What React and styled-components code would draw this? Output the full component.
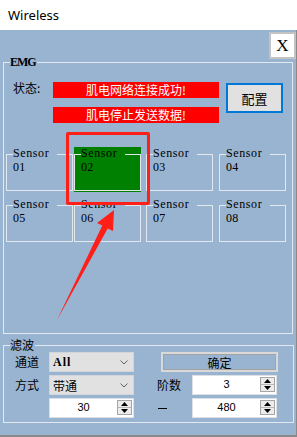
import React from 'react';
import styled, { createGlobalStyle } from 'styled-components';

const Global = createGlobalStyle`
  html, body { margin: 0; padding: 0; background: #fff; }
  body { width: 297px; height: 437px; overflow: hidden; font-family: "Noto Sans CJK SC", sans-serif; }
  * { box-sizing: border-box; }
`;

const Window = styled.div`
  position: relative;
  width: 297px;
  height: 437px;
  display: flex;
  flex-direction: column;
`;

const TitleBar = styled.div`
  height: 30px;
  flex: none;
  background: #fff;
  display: flex;
  align-items: center;
  padding-left: 8px;
  font-family: "Noto Sans", sans-serif;
  font-size: 13px;
  color: #000;
`;

const Body = styled.div`
  flex: 1;
  background: #99b4d1;
  border-right: 1px solid #8a8a8a;
  border-bottom: 2px solid #8a8a8a;
  padding-top: 2px;
  display: flex;
  flex-direction: column;
`;

const HeaderRow = styled.div`
  display: flex;
  justify-content: flex-end;
  margin-bottom: -2px;
`;

const CloseButton = styled.div`
  width: 27px;
  height: 27px;
  border: 2px solid #c3c3c3;
  background: #fff;
  font-family: "Liberation Serif", serif;
  font-size: 17px;
  line-height: 1;
  color: #000;
  display: flex;
  align-items: center;
  justify-content: center;
`;

const Group = styled.fieldset`
  margin: ${p => p.$mt}px 0 0 3px;
  width: ${p => p.$w}px;
  height: ${p => p.$h}px;
  padding: 0;
  border: 1px solid #e4e9ef;
  min-width: 0;
`;

const GroupLegend = styled.legend`
  margin-left: 6px;
  padding: 0 1px 0 0;
  font-family: ${p => p.$serif ? '"Liberation Serif", serif' : '"Noto Sans CJK SC", sans-serif'};
  font-size: 12px;
  font-weight: ${p => p.$serif ? 'bold' : 'normal'};
  letter-spacing: ${p => p.$serif ? '-1px' : '0'};
  line-height: ${p => p.$lh}px;
  color: #000;
`;

const StatusGrid = styled.div`
  display: grid;
  grid-template-columns: 33px 166px 57px;
  grid-template-rows: 16px 16px;
  column-gap: 7px;
  row-gap: 9px;
  margin-top: 14px;
  padding-left: 9px;
`;

const StatusLabel = styled.div`
  font-size: 12px;
  line-height: 12px;
  color: #000;
  white-space: nowrap;
`;

const StatusBar = styled.div`
  background: #ff0000;
  color: #fff;
  font-size: 12px;
  line-height: 16px;
  text-align: center;
  grid-column: 2;
  grid-row: ${p => p.$row};
`;

const ConfigButton = styled.div`
  grid-column: 3;
  grid-row: 1 / span 2;
  margin-top: 1px;
  height: 30px;
  border: 2px solid #0078d7;
  background: #e1e1e1;
  display: flex;
  align-items: center;
  justify-content: center;
  font-size: 13px;
  color: #000;
`;

const SensorArea = styled.div`
  margin-top: 24px;
  padding-left: 2px;
  display: flex;
  flex-direction: column;
  gap: 6px;
`;

const SensorRow = styled.div`
  display: flex;
`;

const SensorCell = styled.div`
  padding: 1px 0;
  margin-left: ${p => p.$ml}px;
  background: ${p => (p.$active ? '#008000' : 'transparent')};
`;

const SensorBox = styled.fieldset`
  margin: 0;
  padding: 0 0 0 6px;
  border: 1px solid #e2e7ed;
  width: 67px;
  height: 43px;
  min-width: 0;
`;

const SensorLegend = styled.legend`
  padding: 0 8px 0 0;
  margin: 0;
  font-family: "Liberation Serif", serif;
  font-size: 12px;
  letter-spacing: 0.6px;
  line-height: 11px;
  height: 12px;
  color: #000;
`;

const SensorNum = styled.div`
  margin-top: 2px;
  font-family: "Liberation Serif", serif;
  font-size: 12px;
  letter-spacing: 0.3px;
  line-height: 11px;
  color: #000;
`;

const FilterGrid = styled.div`
  display: grid;
  grid-template-columns: 34px 85px 23px 35px 85px;
  grid-auto-rows: 20px;
  row-gap: 3px;
  padding: 1px 0 0 11px;
  align-items: center;
`;

const FieldLabel = styled.div`
  grid-column: ${p => p.$col};
  font-size: 12px;
  line-height: 20px;
  color: #000;
  white-space: nowrap;
`;

const Dash = styled.div`
  grid-column: 4;
  margin-left: 1px;
  margin-top: 1px;
  width: 9px;
  height: 1.5px;
  background: #000;
`;

const Select = styled.div`
  grid-column: 2;
  height: 20px;
  background: #e1e1e1;
  border: 1px solid #d2d6da;
  display: flex;
  align-items: center;
  justify-content: space-between;
  padding: 0 5px 0 3px;
`;

const SelectText = styled.span`
  font-family: ${p => p.$serif ? '"Liberation Serif", serif' : '"Noto Sans CJK SC", sans-serif'};
  font-size: 12px;
  font-weight: ${p => p.$serif ? 'bold' : 'normal'};
  letter-spacing: ${p => p.$serif ? '1px' : '0'};
  color: #000;
`;

const OkButton = styled.div`
  grid-column: 4 / span 2;
  margin-left: 4px;
  width: 117px;
  height: 20px;
  border: 2px solid #d9d9d9;
  box-shadow: inset 0 0 0 1px #a3a3a3;
  display: flex;
  align-items: center;
  justify-content: center;
  font-size: 12px;
  color: #000;
`;

const Spin = styled.div`
  grid-column: ${p => p.$col};
  height: 20px;
  background: #fff;
  border: 1px solid #dde1e5;
  display: flex;
  align-items: flex-start;
  padding: 1px 1px 0 0;
`;

const SpinValue = styled.span`
  flex: 1;
  text-align: center;
  font-family: "Liberation Sans", sans-serif;
  font-size: 11px;
  line-height: 14px;
  color: #000;
`;

const SpinButtons = styled.div`
  width: 15px;
  height: 15px;
  border: 1px solid #a5a5a5;
  background: #ececec;
  display: flex;
  flex-direction: column;
`;

const SpinHalf = styled.div`
  flex: 1;
  display: flex;
  align-items: center;
  justify-content: center;
  border-top: ${p => (p.$down ? '1px solid #b8b8b8' : 'none')};
`;

const Highlight = styled.div`
  position: absolute;
  left: 66px;
  top: 132px;
  width: 84px;
  height: 73px;
  border: 3px solid #fe2018;
  border-radius: 2px;
  pointer-events: none;
`;

const Overlay = styled.svg`
  position: absolute;
  left: 0;
  top: 0;
  pointer-events: none;
`;

const Chevron = () => (
  <svg width="8" height="5" viewBox="0 0 8 5">
    <polyline points="0.5,0.5 4,4 7.5,0.5" fill="none" stroke="#606060" strokeWidth="1" />
  </svg>
);

const Tri = ({ down }) => (
  <svg width="7" height="4" viewBox="0 0 7 4">
    {down ? <polygon points="0,0 7,0 3.5,4" fill="#000" /> : <polygon points="3.5,0 7,4 0,4" fill="#000" />}
  </svg>
);

const SpinBox = ({ col, value }) => (
  <Spin $col={col}>
    <SpinValue>{value}</SpinValue>
    <SpinButtons>
      <SpinHalf><Tri /></SpinHalf>
      <SpinHalf $down><Tri down /></SpinHalf>
    </SpinButtons>
  </Spin>
);

const Sensor = ({ n, ml, active }) => (
  <SensorCell $ml={ml} $active={active}>
    <SensorBox>
      <SensorLegend>Sensor</SensorLegend>
      <SensorNum>{n}</SensorNum>
    </SensorBox>
  </SensorCell>
);

const offsets = [0, 1, 5, 6];

export default function App() {
  return (
    <>
      <Global />
      <Window>
        <TitleBar>Wireless</TitleBar>
        <Body>
          <HeaderRow>
            <CloseButton>X</CloseButton>
          </HeaderRow>
          <Group $mt={0} $w={290} $h={277}>
            <GroupLegend $serif $lh={11}>EMG</GroupLegend>
            <StatusGrid>
              <StatusLabel>状态:</StatusLabel>
              <StatusBar $row={1}>肌电网络连接成功!</StatusBar>
              <StatusBar $row={2}>肌电停止发送数据!</StatusBar>
              <ConfigButton>配置</ConfigButton>
            </StatusGrid>
            <SensorArea>
              <SensorRow>
                {['01', '02', '03', '04'].map((n, i) => (
                  <Sensor key={n} n={n} ml={offsets[i]} active={n === '02'} />
                ))}
              </SensorRow>
              <SensorRow>
                {['05', '06', '07', '08'].map((n, i) => (
                  <Sensor key={n} n={n} ml={offsets[i]} />
                ))}
              </SensorRow>
            </SensorArea>
          </Group>
          <Group $mt={5} $w={291} $h={84}>
            <GroupLegend $lh={12}>滤波</GroupLegend>
            <FilterGrid>
              <FieldLabel $col={1}>通道</FieldLabel>
              <Select>
                <SelectText $serif>All</SelectText>
                <Chevron />
              </Select>
              <OkButton>确定</OkButton>
              <FieldLabel $col={1}>方式</FieldLabel>
              <Select>
                <SelectText>带通</SelectText>
                <Chevron />
              </Select>
              <FieldLabel $col={4}>阶数</FieldLabel>
              <SpinBox col={5} value="3" />
              <SpinBox col={2} value="30" />
              <Dash />
              <SpinBox col={5} value="480" />
            </FilterGrid>
          </Group>
        </Body>
        <Highlight />
        <Overlay width="297" height="437" viewBox="0 0 297 437">
          <polygon
            points="114,210 113,231 107.7,228.4 57,320 102.3,225.6 97,223"
            fill="#fe2018"
          />
        </Overlay>
      </Window>
    </>
  );
}
